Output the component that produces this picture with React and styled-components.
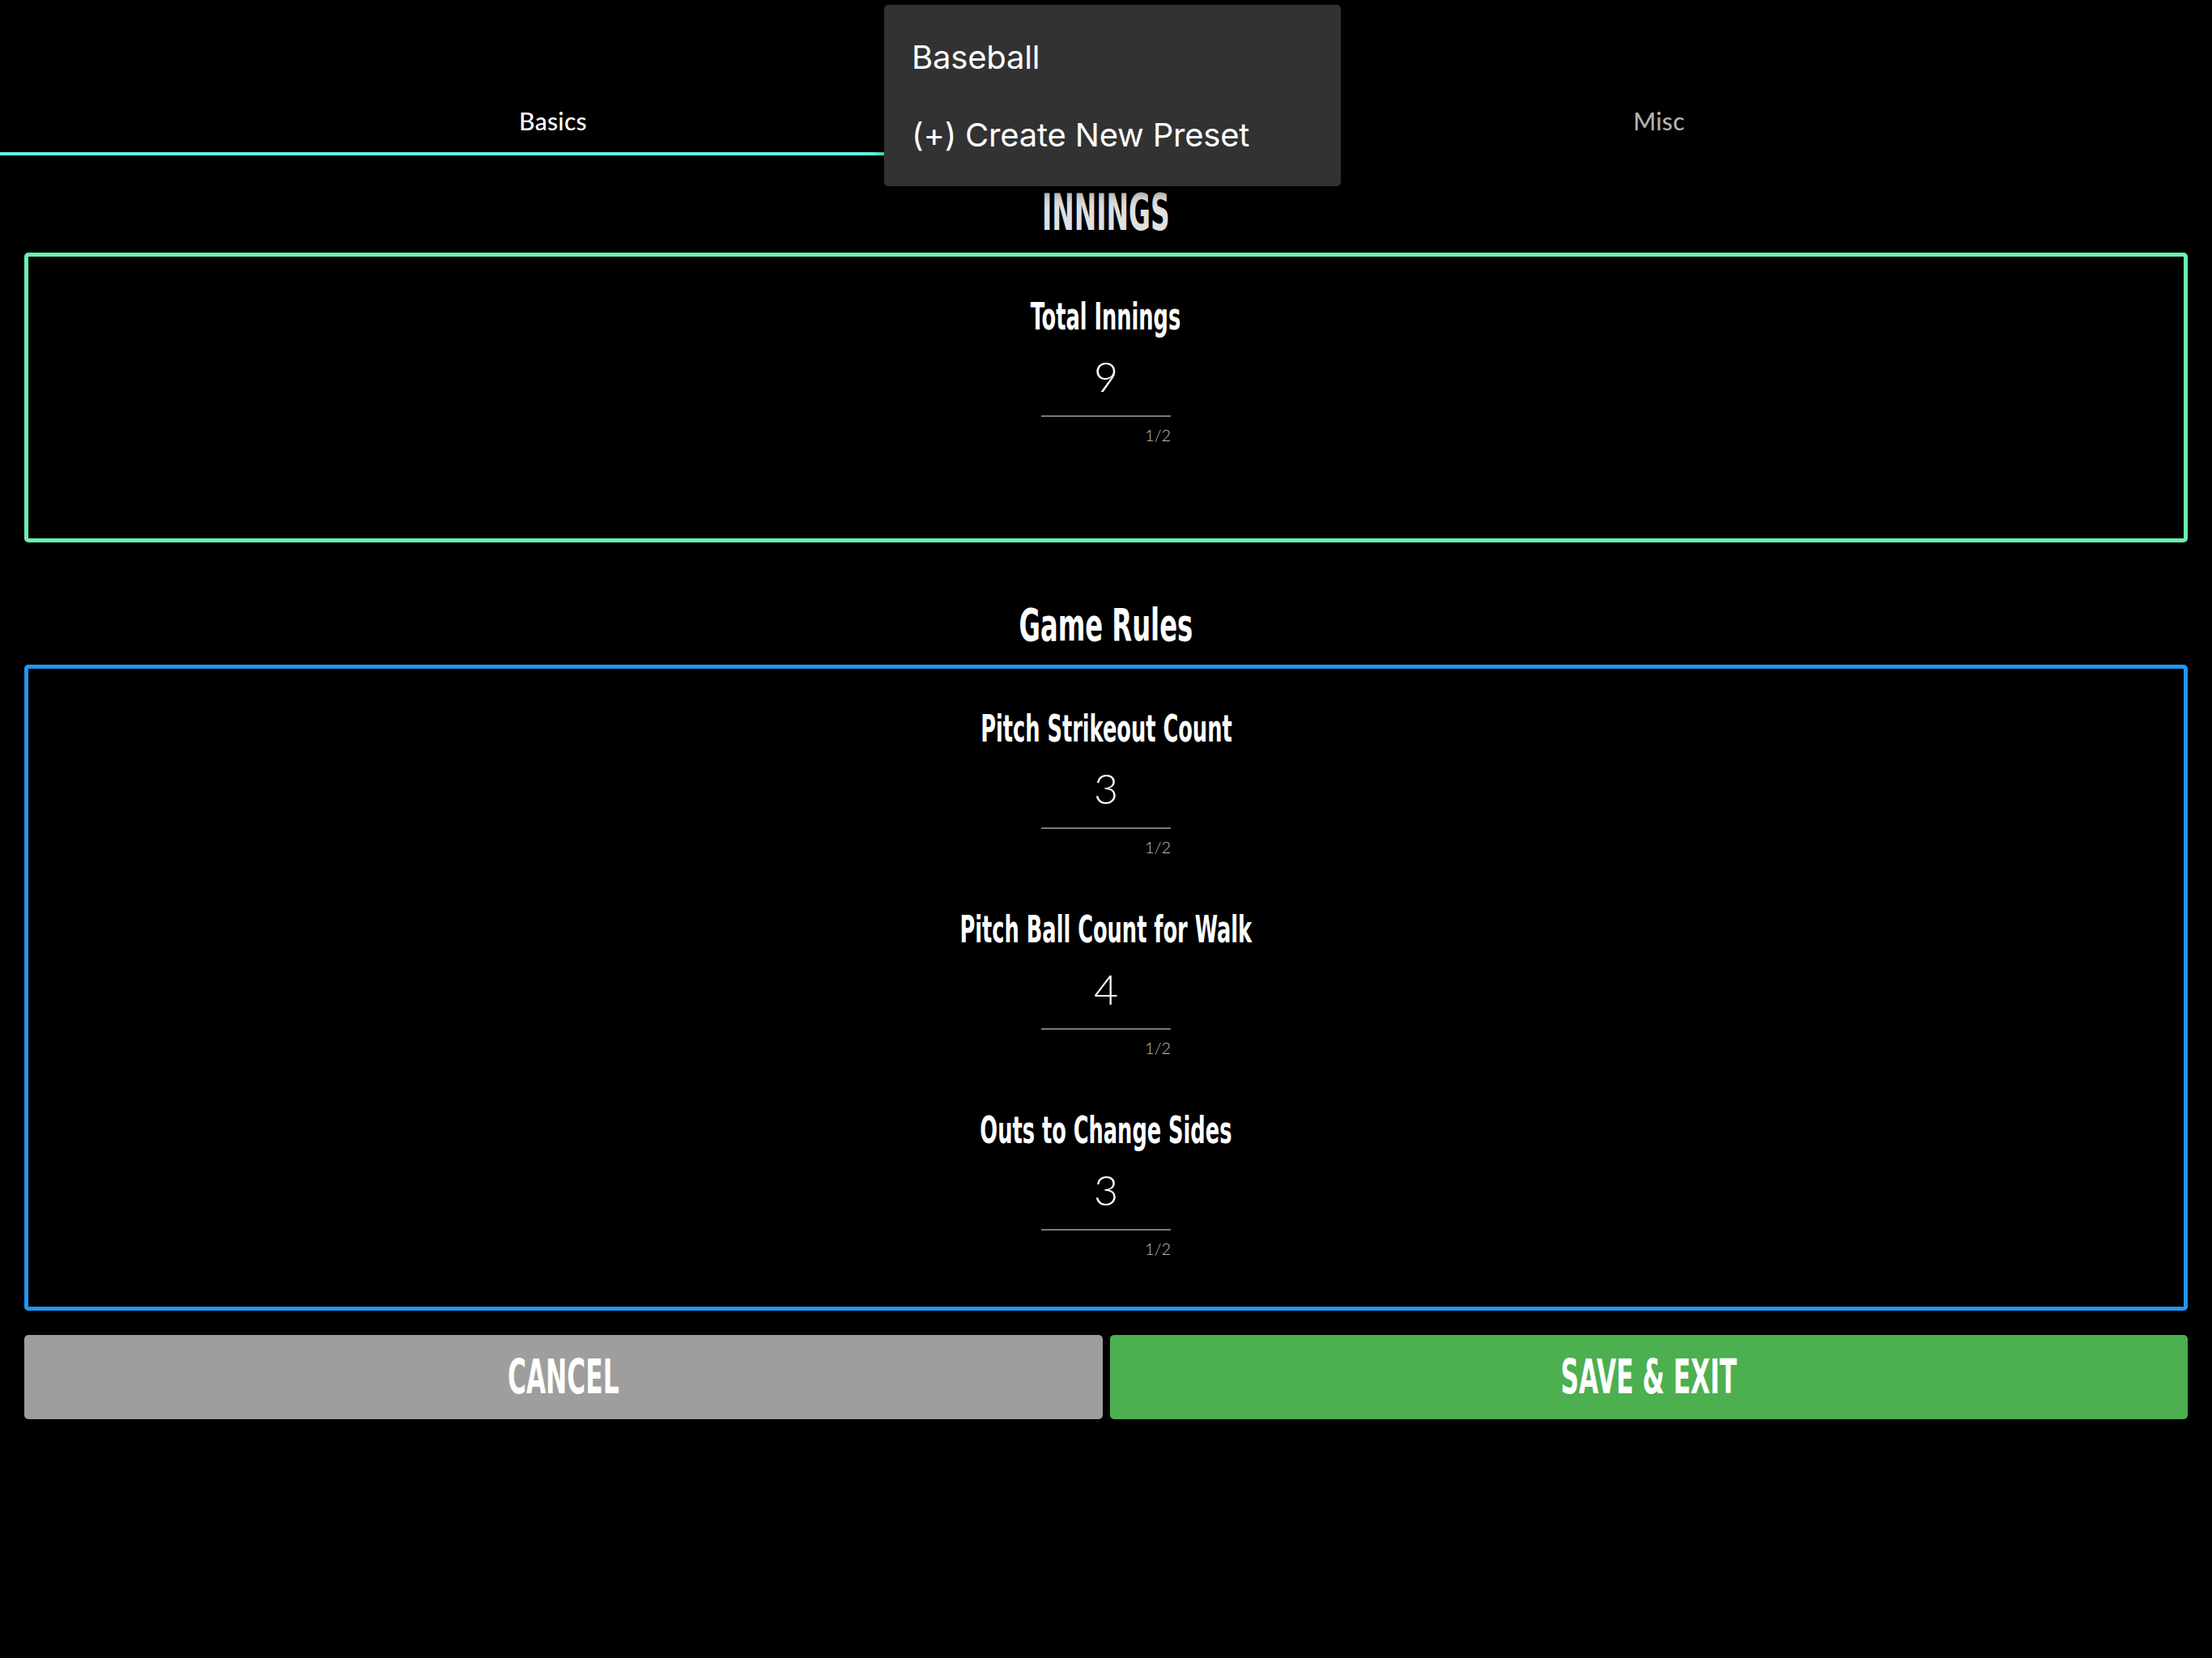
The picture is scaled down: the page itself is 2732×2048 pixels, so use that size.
import React from "react";
import styled, { createGlobalStyle } from "styled-components";

const GlobalStyle = createGlobalStyle`
  html, body {
    margin: 0;
    padding: 0;
    background: #000;
  }
  body {
    min-height: 2048px;
    font-family: "Lato", "Noto Sans", sans-serif;
    color: #fff;
  }
  * {
    box-sizing: border-box;
  }
`;

const CONDENSED = `"Liberation Sans Narrow", "DejaVu Sans", sans-serif`;

const fields = {
  innings: [{ label: "Total Innings", value: "9" }],
  rules: [
    { label: "Pitch Strikeout Count", value: "3" },
    { label: "Pitch Ball Count for Walk", value: "4" },
    { label: "Outs to Change Sides", value: "3" },
  ],
};

export default function App() {
  return (
    <Page>
      <GlobalStyle />
      <TabBar>
        <Tab $active>Basics</Tab>
        <Tab>Misc</Tab>
      </TabBar>

      <PresetMenu>
        <PresetItem>Baseball</PresetItem>
        <PresetItem>(+) Create New Preset</PresetItem>
      </PresetMenu>

      <Content>
        <SectionTitle
          $size={63}
          $color="#e0e0e0"
          $top={39}
          $bottom={18}
          $squeeze={0.58}
        >
          <span>INNINGS</span>
        </SectionTitle>
        <Panel $border="#69f0ae" $minHeight={358} $padTop={51}>
          {fields.innings.map((f) => (
            <Field key={f.label} label={f.label} value={f.value} />
          ))}
        </Panel>

        <SectionTitle $size={56} $color="#fff" $top={74} $squeeze={0.64}>
          <span>Game Rules</span>
        </SectionTitle>
        <Panel $border="#2196f3" $padTop={51}>
          {fields.rules.map((f) => (
            <Field key={f.label} label={f.label} value={f.value} />
          ))}
        </Panel>

        <ButtonRow>
          <ActionButton $bg="#9e9e9e" $squeeze={0.6}>
            <span>CANCEL</span>
          </ActionButton>
          <ActionButton $bg="#4caf50" $squeeze={0.6}>
            <span>SAVE &amp; EXIT</span>
          </ActionButton>
        </ButtonRow>
      </Content>
    </Page>
  );
}

function Field({ label, value }) {
  return (
    <FieldWrap>
      <FieldLabel $squeeze={0.62}>
        <span>{label}</span>
      </FieldLabel>
      <InputBox>
        <DigitInput>{value}</DigitInput>
        <Counter>{value.length}/2</Counter>
      </InputBox>
    </FieldWrap>
  );
}

const Page = styled.div`
  position: relative;
  width: 100%;
  min-height: 2048px;
  background: #000;
`;

const TabBar = styled.div`
  display: flex;
  height: 192px;
`;

const Tab = styled.div`
  flex: 1;
  display: flex;
  justify-content: center;
  padding-top: 134px;
  font-family: "Lato", sans-serif;
  font-weight: 500;
  font-size: 30px;
  line-height: 30px;
  letter-spacing: 0.3px;
  color: ${(p) => (p.$active ? "#fff" : "#b0b0b0")};
  border-bottom: 4px solid ${(p) => (p.$active ? "#64ffda" : "transparent")};
`;

const PresetMenu = styled.div`
  position: absolute;
  top: 6px;
  left: 1092px;
  width: 564px;
  padding: 16px 0;
  background: #323232;
  border-radius: 5px;
  box-shadow: 0 6px 20px rgba(0, 0, 0, 0.5);
  z-index: 10;
`;

const PresetItem = styled.div`
  height: 96px;
  display: flex;
  align-items: center;
  padding: 0 34px;
  font-family: "Inter", "Lato", sans-serif;
  font-size: 40px;
  letter-spacing: -0.2px;
  color: #fff;
`;

const Content = styled.div`
  padding: 0 30px;
`;

const Squeezed = styled.div`
  display: flex;
  justify-content: center;
  font-family: ${CONDENSED};
  font-stretch: condensed;
  font-weight: 700;
  white-space: nowrap;

  span {
    display: inline-block;
    transform: scaleX(${(p) => p.$squeeze || 0.62});
    transform-origin: center;
  }
`;

const SectionTitle = styled(Squeezed)`
  margin-top: ${(p) => p.$top}px;
  margin-bottom: ${(p) => p.$bottom ?? 21}px;
  font-size: ${(p) => p.$size}px;
  line-height: ${(p) => p.$size}px;
  color: ${(p) => p.$color};
`;

const Panel = styled.div`
  display: flex;
  flex-direction: column;
  align-items: center;
  gap: 69px;
  min-height: ${(p) => p.$minHeight || 0}px;
  padding: ${(p) => p.$padTop || 49}px 0 62px;
  border: 5px solid ${(p) => p.$border};
  border-radius: 5px;
`;

const FieldWrap = styled.div`
  display: flex;
  flex-direction: column;
  align-items: center;
`;

const FieldLabel = styled(Squeezed)`
  font-size: 46px;
  line-height: 46px;
  color: #fff;
`;

const InputBox = styled.div`
  margin-top: 24px;
  width: 160px;
  display: flex;
  flex-direction: column;
`;

const DigitInput = styled.div`
  padding-bottom: 23px;
  border-bottom: 2px solid #7a7a7a;
  text-align: center;
  font-family: "Lato", sans-serif;
  font-weight: 300;
  font-size: 52px;
  line-height: 52px;
  color: #fff;
`;

const Counter = styled.div`
  margin-top: 12px;
  align-self: flex-end;
  font-family: "Lato", sans-serif;
  font-weight: 300;
  font-size: 20px;
  line-height: 20px;
  color: #bdbdbd;
`;

const ButtonRow = styled.div`
  display: flex;
  gap: 9px;
  margin-top: 30px;
`;

const ActionButton = styled(Squeezed)`
  flex: 1;
  height: 104px;
  align-items: center;
  border-radius: 5px;
  background: ${(p) => p.$bg};
  font-size: 58px;
  line-height: 58px;
  color: #fff;
  cursor: pointer;
`;
